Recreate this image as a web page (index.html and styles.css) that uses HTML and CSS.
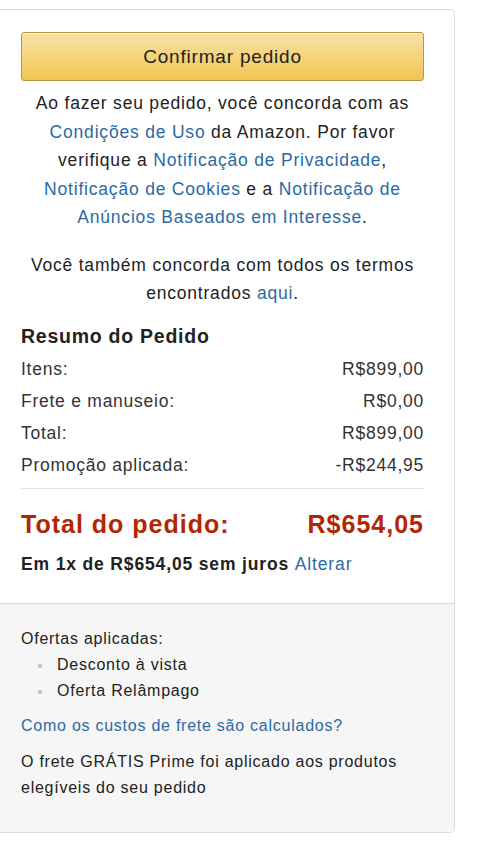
FILE: index.html
```html
<!DOCTYPE html>
<html lang="pt-BR">
<head>
    <meta charset="UTF-8">
    <meta name="viewport" content="width=device-width, initial-scale=1.0">
    <title>Confirmar pedido</title>
    <link rel="stylesheet" href="styles.css">
</head>
<body>
    <div class="order-box">
        <div class="order-main">
            <button class="place-order">Confirmar pedido</button>

            <p class="legal">Ao fazer seu pedido, você concorda com as
                <a href="#">Condições de Uso</a> da Amazon. Por favor
                verifique a <a href="#">Notificação de Privacidade</a>,
                <a href="#">Notificação de Cookies</a> e a <a href="#">Notificação de
                Anúncios Baseados em Interesse</a>.</p>
            <p class="legal terms">Você também concorda com todos os termos
                encontrados <a href="#">aqui</a>.</p>

            <h3 class="summary-title">Resumo do Pedido</h3>
            <div class="summary-rows">
                <div class="row"><span>Itens:</span><span>R$899,00</span></div>
                <div class="row"><span>Frete e manuseio:</span><span>R$0,00</span></div>
                <div class="row"><span>Total:</span><span>R$899,00</span></div>
                <div class="row"><span>Promoção aplicada:</span><span>-R$244,95</span></div>
            </div>

            <div class="grand-total">
                <span>Total do pedido:</span>
                <span>R$654,05</span>
            </div>
            <div class="installments">Em 1x de R$654,05 sem juros <a href="#">Alterar</a></div>
        </div>

        <div class="order-extra">
            <div>Ofertas aplicadas:</div>
            <ul class="offers">
                <li>Desconto à vista</li>
                <li>Oferta Relâmpago</li>
            </ul>
            <a class="shipping-link" href="#">Como os custos de frete são calculados?</a>
            <p class="prime-note">O frete GRÁTIS Prime foi aplicado aos produtos elegíveis do seu pedido</p>
        </div>
    </div>
</body>
</html>
```

FILE: styles.css
```css
body {
    margin: 0;
    background-color: #fff;
    font-family: "Liberation Sans", Arial, sans-serif;
    color: #111;
}
a {
    color: #2a6aa3;
    text-decoration: none;
}
.order-box {
    box-sizing: border-box;
    width: 465px;
    margin: 9px 0 0 -10px;
    border: 1px solid #dcdcdc;
    border-radius: 5px;
    overflow: hidden;
}
.order-main {
    padding: 22px 30px 27px 30px;
}
.place-order {
    display: block;
    width: 100%;
    height: 49px;
    border: 1px solid #b9953f;
    border-radius: 3px;
    background: linear-gradient(#f8e2a9, #f1c54f);
    box-shadow: inset 0 1px 0 rgba(255,255,255,0.5);
    font-family: inherit;
    font-size: 19px;
    letter-spacing: 0.8px;
    color: #222;
    cursor: pointer;
}
.legal {
    margin: 8px 0 0 0;
    text-align: center;
    font-size: 17.5px;
    letter-spacing: 0.8px;
    line-height: 28.5px;
    color: #222;
}
.legal.terms {
    margin-top: 19px;
}
.summary-title {
    margin: 15px 0 0 0;
    font-size: 19.5px;
    letter-spacing: 0.75px;
    line-height: 26px;
    font-weight: bold;
    color: #222;
}
.summary-rows {
    margin-top: 4px;
    padding-bottom: 6px;
    border-bottom: 1px solid #e3e3e3;
}
.row {
    display: flex;
    justify-content: space-between;
    font-size: 17.5px;
    letter-spacing: 0.75px;
    line-height: 32.3px;
    color: #333;
}
.grand-total {
    display: flex;
    justify-content: space-between;
    margin-top: 20px;
    font-size: 25px;
    letter-spacing: 1px;
    line-height: 30px;
    font-weight: bold;
    color: #b12704;
}
.installments {
    margin-top: 13px;
    font-size: 17.5px;
    letter-spacing: 0.85px;
    line-height: 24px;
    font-weight: bold;
    color: #222;
}
.installments a {
    font-weight: normal;
}
.order-extra {
    background-color: #f6f6f6;
    border-top: 1px solid #dcdcdc;
    padding: 22px 30px 31px 30px;
    font-size: 16px;
    letter-spacing: 0.75px;
    line-height: 26px;
    color: #222;
}
.offers {
    margin: 0 0 9px 0;
    padding-left: 36px;
    list-style: none;
}
.offers li {
    position: relative;
}
.offers li::before {
    content: "";
    position: absolute;
    left: -19px;
    top: 12px;
    width: 4px;
    height: 4px;
    border-radius: 50%;
    background-color: #bbb;
}
.shipping-link {
    display: block;
}
.prime-note {
    margin: 10px 0 0 0;
}
```
